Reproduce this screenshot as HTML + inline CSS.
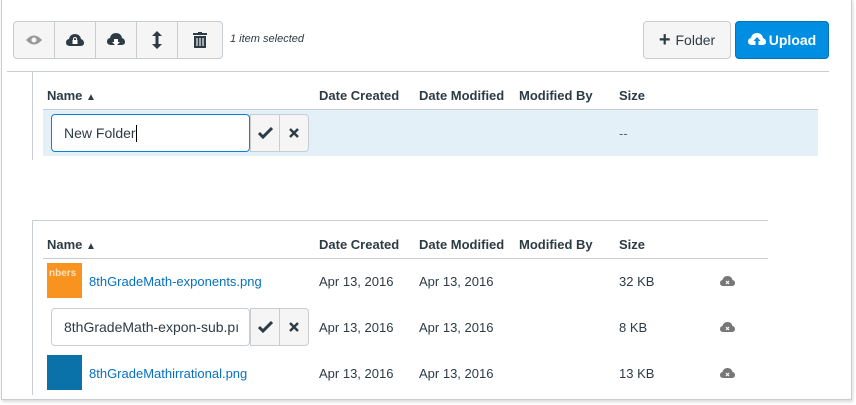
<!DOCTYPE html>
<html><head><style>
body{margin:0;width:856px;height:405px;background:#fff;position:relative;overflow:hidden;font-family:"Liberation Sans",sans-serif;color:#2d3b45}
.a{position:absolute}
.frame{left:1px;top:-2px;width:849px;height:401px;border:1px solid #c7cdd1;border-top:none;box-shadow:1px 2px 3px rgba(0,0,0,.15)}
.tb{top:21px;left:13px;height:36px;border:1px solid #c7cdd1;border-radius:4px;background:#f5f5f5;display:flex;overflow:hidden}
.tb div{width:40px;border-right:1px solid #c7cdd1;display:flex;align-items:center;justify-content:center}
.tb div:last-child{border-right:none;width:44px}
.btn{border:1px solid #c7cdd1;border-radius:4px;background:#f5f5f5;display:flex;align-items:center;justify-content:center;font-size:14px}
.hd{font-size:13px;font-weight:bold}
.t{font-size:13px}
.lnk{color:#0770c0;font-size:13px}
.hl{height:1px;background:#c7cdd1}
.vl{width:1px;background:#c7cdd1}
.inp{border:1px solid #c7cdd1;border-radius:4px;background:#fff;font-size:14px;padding-left:12px;box-sizing:border-box;display:flex;align-items:center;overflow:hidden;white-space:nowrap}
.sb{border:1px solid #c7cdd1;background:#f5f5f5;display:flex;align-items:center;justify-content:center;box-sizing:border-box}
</style></head><body>
<div class="a frame"></div>
<div class="a tb">
<div><svg width="16" height="12" viewBox="0 0 16 12"><path d="M0 6Q8-3 16 6Q8 15 0 6Z" fill="#999"/><circle cx="8" cy="6" r="2.5" fill="#f5f5f5"/></svg></div>
<div><svg width="18" height="14" viewBox="0 0 18 14"><path d="M4 13Q0 13 0 9.5Q0 6.5 3 6Q4 1 9 1Q14 1 15 6Q18 7 18 10Q18 13 14 13Z" fill="#2d3b45"/><rect x="6.5" y="7" width="5" height="4" fill="#fff"/><path d="M7.5 7V5.5Q9 3.5 10.5 5.5V7" stroke="#fff" fill="none"/></svg></div>
<div><svg width="18" height="14" viewBox="0 0 18 14"><path d="M4 12Q0 12 0 8.5Q0 5.5 3 5Q4 0 9 0Q14 0 15 5Q18 6 18 9Q18 12 14 12Z" fill="#2d3b45"/><path d="M7 6h4v3h2l-4 4-4-4h2z" fill="#fff"/></svg></div>
<div><svg width="10" height="18" viewBox="0 0 10 18"><path d="M5 0L10 5H6.5V13H10L5 18 0 13H3.5V5H0Z" fill="#2d3b45"/></svg></div>
<div><svg width="14" height="16" viewBox="0 0 14 16"><rect x="0" y="1" width="14" height="2" fill="#2d3b45"/><rect x="5" y="0" width="4" height="2" fill="#2d3b45"/><path d="M1 4h12v12H1z" fill="#2d3b45"/><path d="M4 6v8M7 6v8M10 6v8" stroke="#f5f5f5" stroke-width="1.2"/></svg></div>
</div>
<div class="a" style="left:230px;top:33px;font-size:11px;font-style:italic">1 item selected</div>
<div class="a btn" style="left:643px;top:21px;width:86px;height:36px"><b style="font-size:20px;margin-right:5px;font-weight:bold">+</b>Folder</div>
<div class="a btn" style="left:735px;top:21px;width:92px;height:36px;background:#008ee2;border-color:#0374b5;color:#fff;font-weight:bold"><svg width="18" height="14" viewBox="0 0 18 14" style="margin-right:3px"><path d="M4 12Q0 12 0 8.5Q0 5.5 3 5Q4 0 9 0Q14 0 15 5Q18 6 18 9Q18 12 14 12Z" fill="#fff"/><path d="M7.5 13V8H5.5l3.5-4 3.5 4h-2v5z" fill="#008ee2"/></svg>Upload</div>
<div class="a hl" style="left:7px;top:71px;width:822px"></div>
<div class="a vl" style="left:32px;top:71px;height:89px"></div>
<div class="a hd" style="left:47px;top:88px">Name <span style="font-size:10px">▲</span></div>
<div class="a hd" style="left:319px;top:88px">Date Created</div>
<div class="a hd" style="left:419px;top:88px">Date Modified</div>
<div class="a hd" style="left:519px;top:88px">Modified By</div>
<div class="a hd" style="left:619px;top:88px">Size</div>
<div class="a" style="left:43px;top:109px;width:775px;height:46px;background:#e3f0f8;border-top:1px solid #c7cdd1"></div>
<div class="a inp" style="left:51px;top:114px;width:199px;height:38px;border-color:#0f80d2">New Folder<span style="display:inline-block;width:1px;height:17px;background:#000"></span></div>
<div class="a sb" style="left:250px;top:114px;width:30px;height:38px"><svg width="15" height="12" viewBox="0 0 15 12"><path d="M1 6l4 4L14 1" stroke="#2d3b45" stroke-width="3" fill="none"/></svg></div>
<div class="a sb" style="left:279px;top:114px;width:30px;height:38px;border-radius:0 4px 4px 0"><svg width="10" height="10" viewBox="0 0 10 10"><path d="M1 1l8 8M9 1l-8 8" stroke="#2d3b45" stroke-width="2.4"/></svg></div>
<div class="a t" style="left:619px;top:126px;color:#666">--</div>

<div class="a hl" style="left:32px;top:220px;width:736px"></div>
<div class="a vl" style="left:32px;top:220px;height:175px"></div>
<div class="a hd" style="left:47px;top:237px">Name <span style="font-size:10px">▲</span></div>
<div class="a hd" style="left:319px;top:237px">Date Created</div>
<div class="a hd" style="left:419px;top:237px">Date Modified</div>
<div class="a hd" style="left:519px;top:237px">Modified By</div>
<div class="a hd" style="left:619px;top:237px">Size</div>
<div class="a hl" style="left:43px;top:258px;width:725px"></div>

<div class="a" style="left:47px;top:263px;width:35px;height:35px;background:#f7931e"><div style="color:#fde3c0;font-size:10px;font-weight:bold;margin:5px 0 0 2px">nbers</div></div>
<div class="a lnk" style="left:89px;top:274px">8thGradeMath-exponents.png</div>
<div class="a t" style="left:319px;top:274px">Apr 13, 2016</div>
<div class="a t" style="left:419px;top:274px">Apr 13, 2016</div>
<div class="a t" style="left:619px;top:274px">32 KB</div>

<div class="a inp" style="left:51px;top:308px;width:199px;height:38px">8thGradeMath-expon-sub.pı</div>
<div class="a sb" style="left:250px;top:308px;width:30px;height:38px"><svg width="15" height="12" viewBox="0 0 15 12"><path d="M1 6l4 4L14 1" stroke="#2d3b45" stroke-width="3" fill="none"/></svg></div>
<div class="a sb" style="left:279px;top:308px;width:30px;height:38px;border-radius:0 4px 4px 0"><svg width="10" height="10" viewBox="0 0 10 10"><path d="M1 1l8 8M9 1l-8 8" stroke="#2d3b45" stroke-width="2.4"/></svg></div>
<div class="a t" style="left:319px;top:320px">Apr 13, 2016</div>
<div class="a t" style="left:419px;top:320px">Apr 13, 2016</div>
<div class="a t" style="left:619px;top:320px">8 KB</div>

<div class="a" style="left:47px;top:355px;width:35px;height:35px;background:#0a72a8"></div>
<div class="a lnk" style="left:89px;top:366px">8thGradeMathirrational.png</div>
<div class="a t" style="left:319px;top:366px">Apr 13, 2016</div>
<div class="a t" style="left:419px;top:366px">Apr 13, 2016</div>
<div class="a t" style="left:619px;top:366px">13 KB</div>

<svg class="a" style="left:720px;top:275px" width="15" height="12" viewBox="0 0 15 12"><path d="M3.5 11Q0 11 0 8Q0 5.5 2.5 5Q3.5 1 7.5 1Q11.5 1 12.5 5Q15 5.5 15 8Q15 11 11.5 11Z" fill="#777"/><path d="M6 6l3 3M9 6l-3 3" stroke="#fff" stroke-width="1.2"/></svg>
<svg class="a" style="left:720px;top:321px" width="15" height="12" viewBox="0 0 15 12"><path d="M3.5 11Q0 11 0 8Q0 5.5 2.5 5Q3.5 1 7.5 1Q11.5 1 12.5 5Q15 5.5 15 8Q15 11 11.5 11Z" fill="#777"/><path d="M6 6l3 3M9 6l-3 3" stroke="#fff" stroke-width="1.2"/></svg>
<svg class="a" style="left:720px;top:367px" width="15" height="12" viewBox="0 0 15 12"><path d="M3.5 11Q0 11 0 8Q0 5.5 2.5 5Q3.5 1 7.5 1Q11.5 1 12.5 5Q15 5.5 15 8Q15 11 11.5 11Z" fill="#777"/><path d="M6 6l3 3M9 6l-3 3" stroke="#fff" stroke-width="1.2"/></svg>
</body></html>
